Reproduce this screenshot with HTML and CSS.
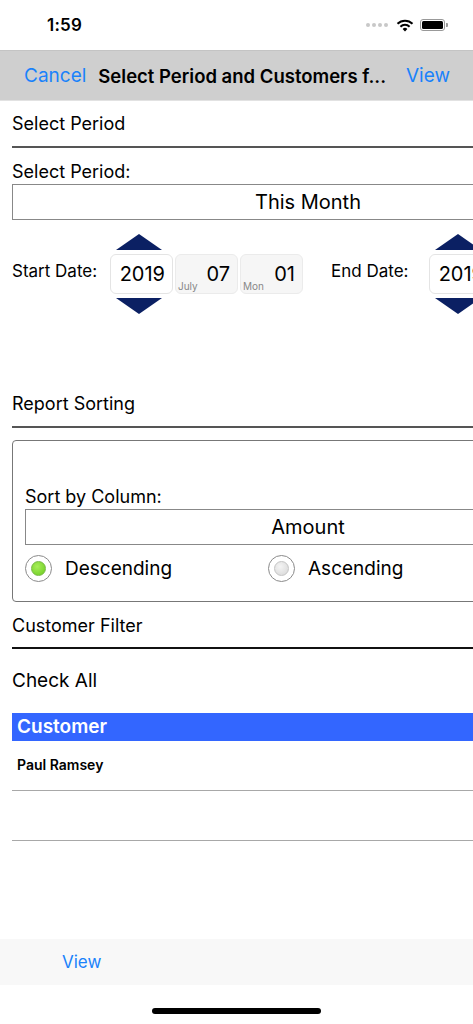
FILE: index.html
```html
<!doctype html>
<html lang=en>
<head>
    <meta charset="utf-8">
    <title>Report Options</title>
    <link rel="stylesheet" href="styles.css">
</head>
<body>
<div class="screen">
    <div class="status">
        <span class="time">1:59</span>
        <span class="status-icons">
            <span class="dots"><i></i><i></i><i></i><i></i></span>
            <svg class="wifi" width="18" height="13" viewBox="0 0 18 13">
                <path d="M9 12.5 L6.6 9.9 A3.5 3.5 0 0 1 11.4 9.9 Z" fill="#000"/>
                <path d="M4.4 7.7 A6.6 6.6 0 0 1 13.6 7.7" stroke="#000" stroke-width="2" fill="none"/>
                <path d="M1.5 4.8 A10.6 10.6 0 0 1 16.5 4.8" stroke="#000" stroke-width="2" fill="none"/>
            </svg>
            <span class="battery"><b></b></span>
        </span>
    </div>

    <div class="navbar">
        <span class="nav-btn">Cancel</span>
        <span class="nav-title">Select Period and Customers f...</span>
        <span class="nav-btn">View</span>
    </div>

    <div class="content">
        <div class="section">Select Period</div>

        <div class="label">Select Period:</div>
        <div class="select">This Month</div>

        <div class="dates">
            <span class="date-label">Start Date:</span>
            <div class="picker">
                <span class="arrow up"></span>
                <div class="fields">
                    <span class="field year">2019</span>
                    <span class="field"><small>July</small>07</span>
                    <span class="field"><small>Mon</small>01</span>
                </div>
                <span class="arrow down"></span>
            </div>
            <span class="date-label end">End Date:</span>
            <div class="picker">
                <span class="arrow up"></span>
                <div class="fields">
                    <span class="field year">2019</span>
                    <span class="field"><small>July</small>31</span>
                    <span class="field"><small>Wed</small>31</span>
                </div>
                <span class="arrow down"></span>
            </div>
        </div>

        <div class="section sorting">Report Sorting</div>

        <div class="group">
            <div class="label">Sort by Column:</div>
            <div class="select">Amount</div>
            <div class="radios">
                <label class="radio on"><span class="dot"></span>Descending</label>
                <label class="radio"><span class="dot"></span>Ascending</label>
            </div>
        </div>

        <div class="section filter">Customer Filter</div>

        <div class="check-all">Check All</div>

        <div class="grid-head">Customer</div>
        <div class="grid-row">Paul Ramsey</div>
        <div class="grid-row empty"></div>
    </div>

    <div class="toolbar">
        <span class="tool-btn">View</span>
    </div>
    <div class="home"><span></span></div>
</div>
</body>
</html>
```

FILE: styles.css
```css
* {
    padding: 0;
    margin: 0;
    box-sizing: border-box;
}
html, body {
    width: 473px;
    height: 1024px;
    overflow: hidden;
    background: #fff;
}
body {
    font-family: Inter, "Liberation Sans", sans-serif;
    color: #000;
}
.screen {
    width: 473px;
    height: 1024px;
    display: flex;
    flex-direction: column;
    overflow: hidden;
}

/* status bar */
.status {
    height: 50px;
    display: flex;
    align-items: center;
    justify-content: space-between;
    padding: 0 28px 0 47px;
}
.time {
    font-size: 17px;
    font-weight: 600;
    letter-spacing: 0.2px;
}
.status-icons {
    display: flex;
    align-items: center;
    gap: 6px;
}
.dots {
    display: flex;
    gap: 2px;
    margin-right: 2px;
}
.dots i {
    width: 4px;
    height: 4px;
    border-radius: 50%;
    background: #c8c8c8;
}
.battery {
    position: relative;
    width: 25px;
    height: 12px;
    border: 1px solid #999;
    border-radius: 3px;
    padding: 1px;
    display: flex;
}
.battery b {
    flex: 1;
    background: #000;
    border-radius: 1.5px;
}
.battery:after {
    content: "";
    position: absolute;
    right: -4px;
    top: 3px;
    width: 2px;
    height: 4px;
    background: #999;
    border-radius: 0 1px 1px 0;
}

/* navigation bar */
.navbar {
    height: 51px;
    background: #cfcfcf;
    border-top: 1px solid #c4c4c4;
    border-bottom: 1px solid #e2e2e2;
    display: flex;
    align-items: center;
    padding: 0 23px 0 24px;
    font-size: 19px;
    white-space: nowrap;
}
.nav-btn {
    color: #1a82fb;
}
.nav-title {
    flex: 1;
    font-weight: 600;
    font-size: 18.5px;
    padding-left: 12px;
}

/* form content */
.content {
    flex: 1;
    width: 604px;
    padding-left: 12px;
}
.section {
    font-size: 18px;
    height: 47px;
    padding-top: 12px;
    border-bottom: 2px solid #555;
}
.label {
    font-size: 18px;
    margin-top: 12px;
    line-height: 24px;
}
.select {
    height: 36px;
    border: 1px solid #888;
    text-align: center;
    font-size: 20px;
    line-height: 34px;
}

.dates {
    display: flex;
    align-items: center;
    margin-top: 13px;
    height: 82px;
}
.dates > * {
    flex-shrink: 0;
}
.date-label {
    font-size: 17px;
    width: 98px;
    padding-bottom: 6px;
}
.date-label.end {
    width: 98px;
    margin-left: 28px;
}
.picker {
    display: flex;
    flex-direction: column;
}
.fields {
    display: flex;
    gap: 2px;
}
.field {
    position: relative;
    width: 63px;
    height: 40px;
    background: #f6f6f6;
    border: 1px solid #ebebeb;
    border-radius: 6px;
    font-size: 20px;
    line-height: 38px;
    text-align: right;
    padding-right: 7px;
}
.field.year {
    background: #fff;
    border-color: #e4e4e4;
}
.field small {
    position: absolute;
    left: 2px;
    bottom: 1px;
    font-size: 10px;
    line-height: 12px;
    color: #888;
}
.arrow {
    width: 0;
    height: 0;
    border-left: 23px solid transparent;
    border-right: 23px solid transparent;
    margin-left: 6px;
}
.arrow.up {
    border-bottom: 16px solid #0b2063;
    margin-bottom: 4px;
}
.arrow.down {
    border-top: 16px solid #0b2063;
    margin-top: 4px;
}

.section.sorting {
    margin-top: 66px;
}

.group {
    margin-top: 12px;
    border: 1px solid #777;
    border-radius: 4px;
    height: 162px;
    padding: 32px 12px 0 12px;
}
.radios {
    display: flex;
    margin-top: 10px;
}
.radio {
    display: flex;
    align-items: center;
    font-size: 19px;
    width: 243px;
}
.dot {
    width: 27px;
    height: 27px;
    border-radius: 50%;
    border: 1px solid #8a8a8a;
    background: #fff;
    margin-right: 13px;
    display: flex;
    align-items: center;
    justify-content: center;
}
.dot:after {
    content: "";
    width: 13px;
    height: 13px;
    border-radius: 50%;
    background: radial-gradient(circle at 40% 35%, #f4f4f4, #d6d6d6);
    border: 1px solid #c4c4c4;
}
.radio.on .dot:after {
    background: radial-gradient(circle at 40% 35%, #a8ee5a, #6acb1e);
    border-color: #78b844;
}

.section.filter {
    height: 46px;
    margin-top: 1px;
    border-bottom-color: #111;
}
.check-all {
    font-size: 19px;
    height: 64px;
    padding-top: 20px;
}
.grid-head {
    height: 28px;
    background: #3366ff;
    color: #fff;
    font-weight: 600;
    font-size: 19px;
    line-height: 28px;
    padding-left: 5px;
}
.grid-row {
    height: 50px;
    border-bottom: 1px solid #a8a8a8;
    font-size: 14px;
    font-weight: 600;
    padding: 15px 0 0 5px;
}

/* bottom toolbar */
.toolbar {
    height: 46px;
    background: #f8f8f8;
    display: flex;
    align-items: center;
    padding-left: 62px;
}
.tool-btn {
    color: #1a82fb;
    font-size: 17px;
}
.home {
    height: 39px;
    display: flex;
    justify-content: center;
    padding-top: 23px;
}
.home span {
    width: 169px;
    height: 6px;
    border-radius: 3px;
    background: #000;
}
```
